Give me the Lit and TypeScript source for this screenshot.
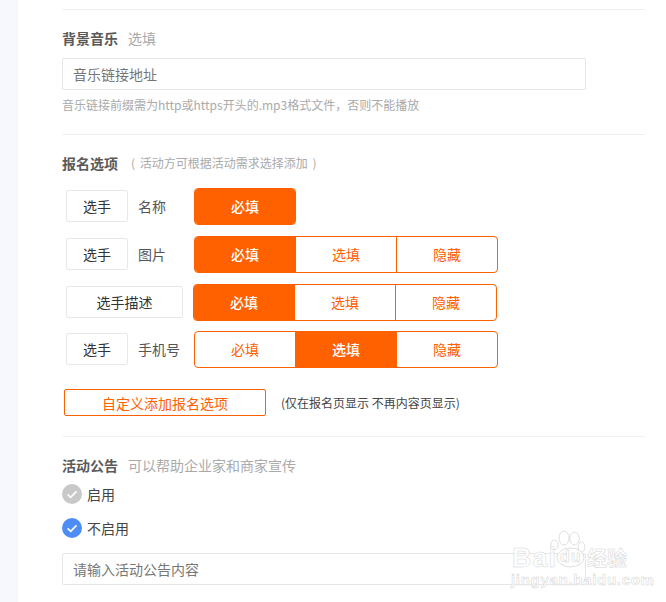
import { LitElement, html, css, svg } from 'lit';
import { customElement } from 'lit/decorators.js';

type Choice = '必填' | '选填' | '隐藏';

const OPTIONS: { tag: string; label: string; modes: Choice[]; active: Choice; wide?: boolean }[] = [
  { tag: '选手', label: '名称', modes: ['必填'], active: '必填' },
  { tag: '选手', label: '图片', modes: ['必填', '选填', '隐藏'], active: '必填' },
  { tag: '选手描述', label: '', modes: ['必填', '选填', '隐藏'], active: '必填', wide: true },
  { tag: '选手', label: '手机号', modes: ['必填', '选填', '隐藏'], active: '选填' }
];

const check = svg`<svg viewBox="0 0 20 20" width="20" height="20"><path d="M5.6 10.4l3.1 3 5.8-6" fill="none" stroke="#fff" stroke-width="1.6"/></svg>`;

@customElement('app-root')
export class AppRoot extends LitElement {
  static styles = css`
    :host {
      display: block;
      position: relative;
      width: 666px;
      height: 602px;
      overflow: hidden;
      background: #fff;
      font-family: 'Noto Sans CJK SC', 'Noto Sans', sans-serif;
      color: #555;
      font-size: 14px;
    }
    .page {
      display: flex;
      height: 100%;
    }
    .rail {
      width: 18px;
      flex: none;
      background: #f6f8fd;
    }
    .form {
      width: 583px;
      margin-left: 44px;
      padding-top: 9px;
    }
    .rule {
      height: 1px;
      background: #f0f0f0;
    }
    .title {
      display: flex;
      align-items: center;
      height: 20px;
      line-height: 20px;
      white-space: nowrap;
    }
    .title b {
      font-weight: 700;
      color: #5a5a5a;
    }
    .title span {
      color: #aaa;
      margin-left: 10px;
    }
    .title .note {
      margin-left: 13px;
      font-size: 12px;
      word-spacing: 2px;
    }
    .music {
      margin-top: 18px;
    }
    .field {
      box-sizing: border-box;
      width: 524px;
      height: 32px;
      line-height: 30px;
      padding-left: 10px;
      border: 1px solid #e6e6e6;
      border-radius: 2px;
      color: #777;
    }
    .music-field {
      margin-top: 10px;
    }
    .hint {
      height: 18px;
      line-height: 18px;
      margin-top: 6px;
      font-size: 12px;
      color: #aaa;
      white-space: nowrap;
    }
    .signup-rule {
      margin-top: 20px;
    }
    .signup {
      margin-top: 18px;
    }
    .rows {
      display: flex;
      flex-direction: column;
      gap: 11px;
      margin-top: 15px;
      padding-left: 4px;
    }
    .row {
      display: flex;
      align-items: flex-start;
      height: 37px;
    }
    .row:last-child {
      margin-top: -1px;
    }
    .lead {
      display: flex;
      align-items: center;
      width: 128px;
      margin-top: 2px;
      flex: none;
    }
    .lead.wide {
      width: 127px;
    }
    .tag {
      box-sizing: border-box;
      width: 62px;
      height: 32px;
      line-height: 30px;
      text-align: center;
      border: 1px solid #e8e8e8;
      border-radius: 2px;
      color: #333;
      flex: none;
    }
    .wide .tag {
      width: 117px;
    }
    .name {
      margin-left: 10px;
      color: #555;
      white-space: nowrap;
    }
    .seg {
      display: flex;
      box-sizing: border-box;
      height: 37px;
      border: 1px solid #ff6000;
      border-radius: 4px;
      overflow: hidden;
    }
    .seg div {
      width: 101px;
      line-height: 35px;
      text-align: center;
      color: #ff6000;
      border-left: 1px solid #ff6000;
      box-sizing: border-box;
    }
    .seg div:first-child {
      width: 100px;
      border-left: 0;
    }
    .seg div.on {
      background: #ff6000;
      color: #fff;
      font-weight: 500;
    }
    .custom {
      display: flex;
      align-items: center;
      margin-top: 21px;
      padding-left: 2px;
    }
    .custom button {
      box-sizing: border-box;
      width: 202px;
      height: 27px;
      padding: 0;
      background: #fff;
      border: 1px solid #ff6000;
      border-radius: 2px;
      color: #ff6000;
      font: inherit;
    }
    .custom span {
      margin-left: 15px;
      font-size: 12px;
      color: #444;
      white-space: nowrap;
    }
    .notice-rule {
      margin-top: 20px;
    }
    .notice {
      margin-top: 18px;
    }
    .radio {
      display: flex;
      align-items: center;
      gap: 5px;
      height: 20px;
      margin-top: 14px;
      color: #444;
    }
    .radio.first {
      margin-top: 9px;
    }
    .dot {
      width: 20px;
      height: 20px;
      border-radius: 50%;
      background: #c8c8c8;
    }
    .dot.on {
      background: #4e8df5;
    }
    .notice .field {
      margin-top: 15px;
    }
    .mark {
      position: absolute;
      left: 510px;
      top: 530px;
      width: 130px;
      height: 60px;
      color: #fff;
      -webkit-text-stroke: 0.5px #d4d4d4;
      pointer-events: none;
    }
    .mark svg {
      position: absolute;
      left: 40px;
      top: 0;
    }
    .mark .bai {
      position: absolute;
      left: 2px;
      top: 14px;
      font: 700 27px/28px 'Liberation Sans', sans-serif;
      letter-spacing: 1px;
    }
    .mark .jy {
      position: absolute;
      left: 77px;
      top: 14px;
      font: 700 20px/28px 'Noto Sans CJK SC', sans-serif;
    }
    .mark .du {
      position: absolute;
      left: 50px;
      top: 18px;
      font: 700 16px/18px 'Liberation Sans', sans-serif;
      letter-spacing: 1px;
    }
    .mark .url {
      position: absolute;
      left: 1px;
      top: 41px;
      font: 700 15px/18px 'Liberation Sans', sans-serif;
      letter-spacing: 0.7px;
      white-space: nowrap;
    }
  `;

  render() {
    return html`
      <div class="page">
        <div class="rail"></div>
        <div class="form">
          <div class="rule"></div>
          <div class="title music"><b>背景音乐</b><span>选填</span></div>
          <div class="field music-field">音乐链接地址</div>
          <div class="hint">音乐链接前缀需为http或https开头的.mp3格式文件，否则不能播放</div>
          <div class="rule signup-rule"></div>
          <div class="title signup"><b>报名选项</b><span class="note">( 活动方可根据活动需求选择添加 )</span></div>
          <div class="rows">
            ${OPTIONS.map(
              (o) => html`
                <div class="row">
                  <div class="lead ${o.wide ? 'wide' : ''}">
                    <div class="tag">${o.tag}</div>
                    ${o.label ? html`<div class="name">${o.label}</div>` : ''}
                  </div>
                  <div class="seg">
                    ${o.modes.map((m) => html`<div class="${m === o.active ? 'on' : ''}">${m}</div>`)}
                  </div>
                </div>
              `
            )}
          </div>
          <div class="custom">
            <button>自定义添加报名选项</button>
            <span>(仅在报名页显示 不再内容页显示)</span>
          </div>
          <div class="rule notice-rule"></div>
          <div class="notice">
            <div class="title"><b>活动公告</b><span>可以帮助企业家和商家宣传</span></div>
            <div class="radio first"><div class="dot">${check}</div>启用</div>
            <div class="radio"><div class="dot on">${check}</div>不启用</div>
            <div class="field">请输入活动公告内容</div>
          </div>
        </div>
      </div>
      <div class="mark">
        <svg width="36" height="38" viewBox="0 0 36 38" fill="#fff" stroke="#d6d6d6" stroke-width="0.8">
          <ellipse cx="4.5" cy="15" rx="3.7" ry="5" />
          <ellipse cx="14" cy="8" rx="5" ry="7" />
          <ellipse cx="24.5" cy="8.5" rx="4.7" ry="6.5" />
          <ellipse cx="31.5" cy="17" rx="3.5" ry="5" />
          <ellipse cx="20.5" cy="27.5" rx="13.5" ry="9.5" />
        </svg>
        <span class="bai">Bai</span>
        <span class="du">du</span>
        <span class="jy">经验</span>
        <span class="url">jingyan.baidu.com</span>
      </div>
    `;
  }
}
